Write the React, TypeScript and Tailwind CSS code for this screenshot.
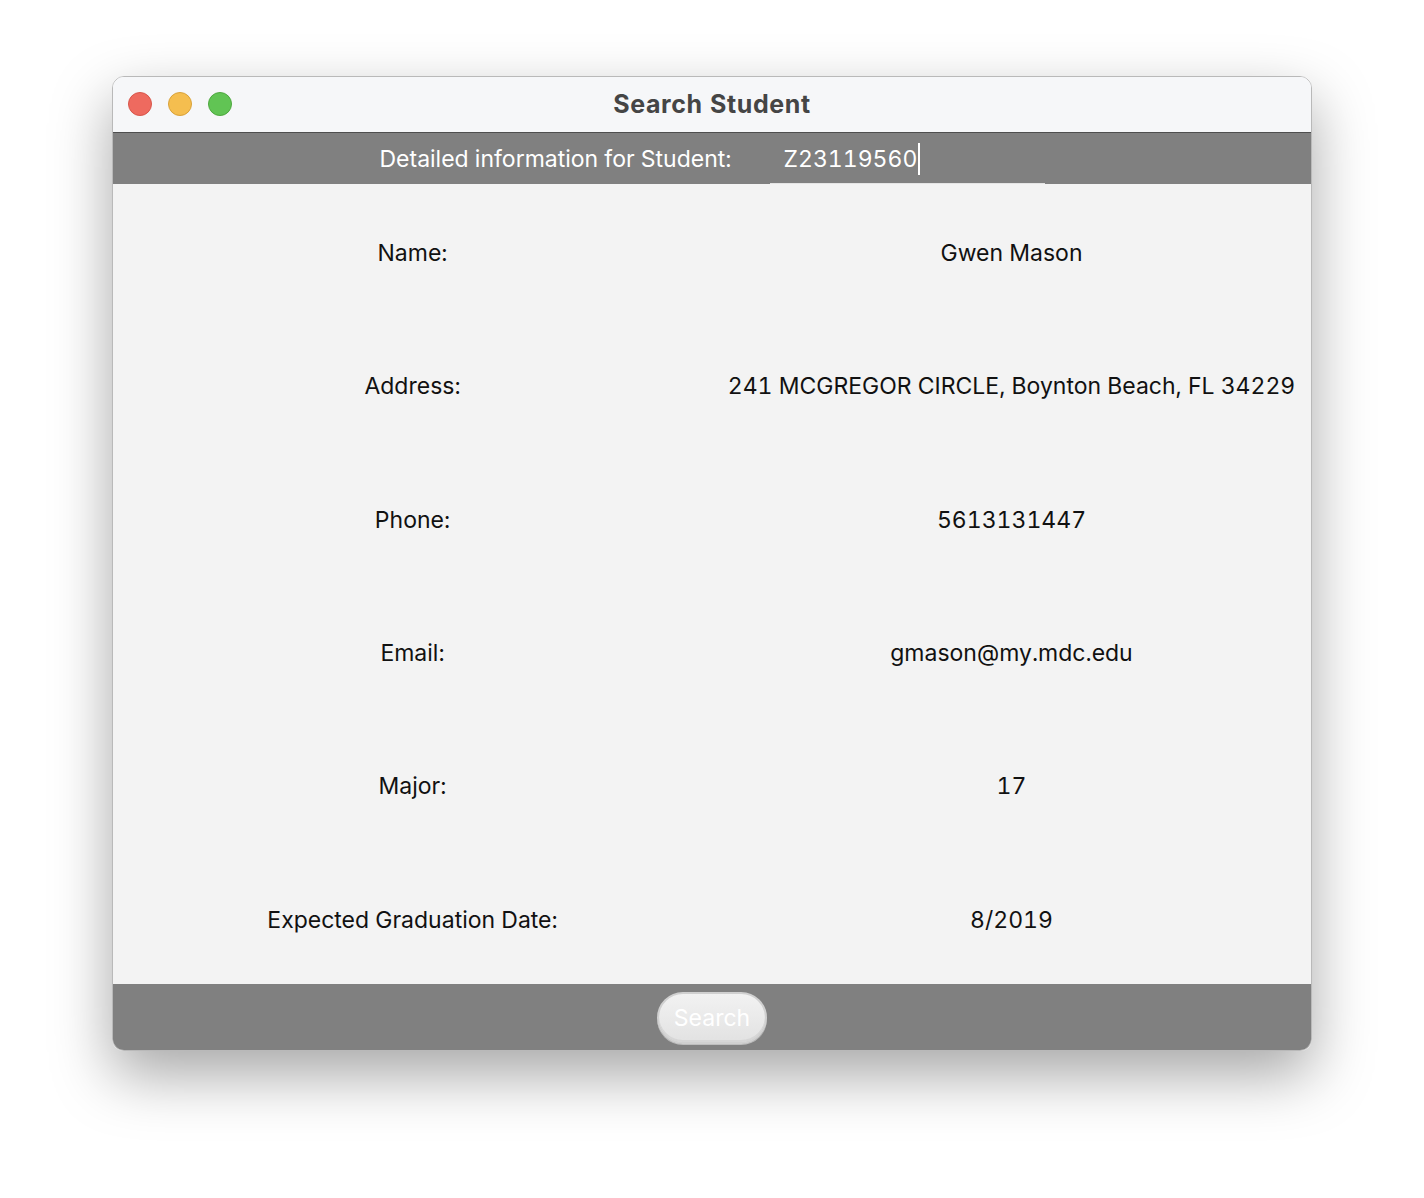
import React from "react";

const rows: [string, string][] = [
  ["Name:", "Gwen Mason"],
  ["Address:", "241 MCGREGOR CIRCLE, Boynton Beach, FL 34229"],
  ["Phone:", "5613131447"],
  ["Email:", "gmason@my.mdc.edu"],
  ["Major:", "17"],
  ["Expected Graduation Date:", "8/2019"],
];

export default function App() {
  return (
    <div
      className="w-[1424px] h-[1198px] bg-white pt-[76px] overflow-hidden tabular-nums"
      style={{ fontFamily: "Inter, 'Noto Sans', sans-serif" }}
    >
      <div className="mx-auto w-[1200px] h-[975px] rounded-[12px] overflow-hidden border border-[#b9b9b9] shadow-[0_24px_60px_rgba(0,0,0,0.35)] flex flex-col">
        {/* Title bar */}
        <div className="relative h-[56px] bg-[#f6f7f9] border-b border-[#4e4e4e] flex items-center justify-center shrink-0">
          <div className="absolute left-[15px] top-[15px] flex gap-[16px]">
            <span className="w-[24px] h-[24px] rounded-full bg-[#ee6a5f] border border-[#d8564b]" />
            <span className="w-[24px] h-[24px] rounded-full bg-[#f5be4f] border border-[#d9a23a]" />
            <span className="w-[24px] h-[24px] rounded-full bg-[#61c454] border border-[#4ea83f]" />
          </div>
          <span className="text-[25px] font-bold text-[#454545] tracking-[0.6px]">Search Student</span>
        </div>
        {/* Header band */}
        <div className="h-[51px] bg-[#808080] flex items-stretch justify-center shrink-0">
          <div className="flex items-center text-[23px] text-white mr-[38px] pt-[2px]">
            Detailed information for Student:
          </div>
          <div className="w-[275px] flex items-center border-b border-[#e4e4e4] pl-[14px] pt-[2px] text-[23px] text-white">
            Z23119560
            <span className="inline-block w-[1.5px] h-[32px] bg-white ml-[1px]" />
          </div>
        </div>
        {/* Content */}
        <div className="flex-1 bg-[#f3f3f3] grid grid-rows-6">
          {rows.map(([label, value]) => (
            <div key={label} className="grid grid-cols-2 items-center text-[23px] text-[#111] pt-[5px]">
              <div className="text-center">{label}</div>
              <div className="text-center">{value}</div>
            </div>
          ))}
        </div>
        {/* Footer */}
        <div className="h-[66px] bg-[#808080] flex justify-center pt-[8px] shrink-0">
          <button className="w-[110px] h-[52px] rounded-full border-[2px] border-[#d0d0d0] bg-gradient-to-b from-[#f2f2f2] to-[#e2e2e2] shadow-[0_1px_0_#bdbdbd,inset_0_-2px_0_#d6d6d6] text-white text-[23px]">
            Search
          </button>
        </div>
      </div>
    </div>
  );
}
